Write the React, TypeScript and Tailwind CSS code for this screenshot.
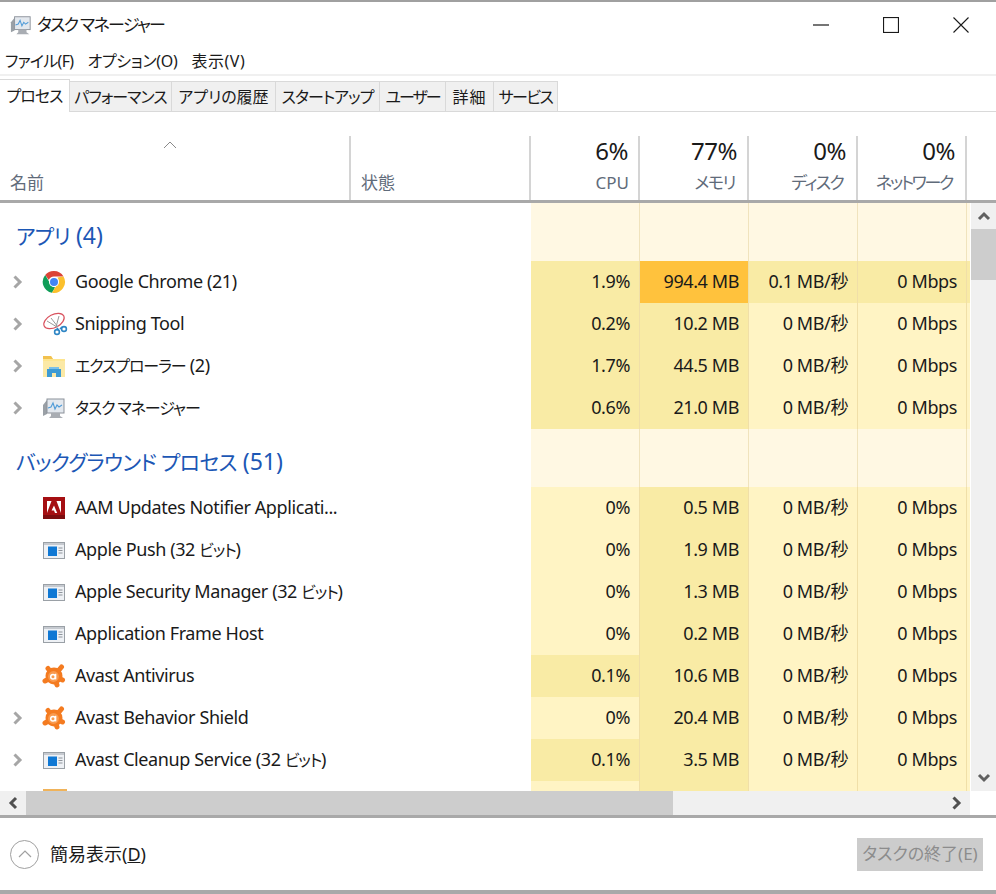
import type { ReactNode } from 'react';

const ChromeIcon = () => (
  <svg width="24" height="24" viewBox="0 0 24 24">
    <path d="M12 1a11 11 0 0 1 9.5 5.5H12a5.5 5.5 0 0 0-5.2 3.6L3.2 5A11 11 0 0 1 12 1z" fill="#db4437" />
    <path d="M3.2 5l4.4 7.6a5 5 0 0 0 5.6 4.6l-3.2 5.6A11 11 0 0 1 3.2 5z" fill="#0f9d58" />
    <path d="M21.5 6.5A11 11 0 0 1 10 22.8l4.8-8.1A5 5 0 0 0 15.4 7.5z" fill="#fbc02d" />
    <circle cx="12" cy="12" r="5" fill="#fff" />
    <circle cx="12" cy="12" r="4" fill="#4285f4" />
  </svg>
);

const SnipIcon = () => (
  <svg width="26" height="24" viewBox="0 0 26 24" fill="none">
    <ellipse cx="12" cy="9" rx="11" ry="6.5" transform="rotate(-28 12 9)" stroke="#d9535f" strokeWidth="1.2" />
    <path d="M9 6l7 9M17 4l-3 11M5 9l10 6" stroke="#9a9a9a" strokeWidth="1" />
    <circle cx="15" cy="20" r="2.4" stroke="#2f86c5" strokeWidth="1.6" />
    <circle cx="22" cy="17" r="2.4" stroke="#2f86c5" strokeWidth="1.6" />
    <path d="M15 16l1.5 2M20 15l-2 2" stroke="#2f86c5" strokeWidth="1.6" />
  </svg>
);

const FolderIcon = () => (
  <svg width="24" height="24" viewBox="0 0 24 24">
    <path d="M1 2h8l2 3h12v18H1z" fill="#fde58f" />
    <path d="M1 2h8l2 3H1z" fill="#f2c14e" />
    <path d="M1 7h22v16H1z" fill="#fbe9a6" />
    <path d="M5 15h14v8H5z" fill="#3d9bd4" />
    <path d="M7 13h10v2H7z" fill="#7cc0e8" />
    <path d="M10 19h4v4h-4z" fill="#fbe9a6" />
  </svg>
);

const TaskIcon = ({ size = 24 }: { size?: number }) => (
  <svg width={size} height={size} viewBox="0 0 24 24" fill="none">
    <path d="M1 9l4-5v14l-4 2z" fill="#9aa0a6" />
    <rect x="5" y="3" width="17" height="14" fill="#e3e8ee" stroke="#8b9199" />
    <path d="M6 12l3-1 2-4 2 6 2-4 2 2 3-2" stroke="#4f9bd8" strokeWidth="1.1" />
    <path d="M9 17h9v3l3 2H7l2-2z" fill="#a9adb3" />
  </svg>
);

const AdobeIcon = () => (
  <svg width="24" height="24" viewBox="0 0 24 24">
    <rect x="1" y="1" width="22" height="22" fill="#a50f12" />
    <rect x="1" y="19" width="22" height="4" fill="#7c0d0f" />
    <path d="M5 5h4.5L5 17zM19 5h-4.5L19 17zM12 9.5l3.2 7.5h-2.2l-1-2.6H9.6z" fill="#fff" />
  </svg>
);

const AppIcon = () => (
  <svg width="24" height="24" viewBox="0 0 24 24">
    <rect x="1.5" y="4.5" width="21" height="16" fill="#eef1f5" stroke="#9aa0a6" />
    <rect x="2" y="5" width="20" height="2" fill="#c6cad0" />
    <rect x="6" y="8.5" width="9" height="9.5" fill="#0f78d4" />
    <path d="M16.5 10h4M16.5 12.5h4M16.5 15h4" stroke="#8e949b" />
  </svg>
);

const AvastIcon = () => (
  <svg width="24" height="24" viewBox="0 0 24 24" fill="none">
    <circle cx="12" cy="12" r="8.5" fill="#f47b20" />
    <path d="M12 12L6 4.5M12 12L19.5 3M12 12L20.5 16M12 12L15 21M12 12L3 17" stroke="#f47b20" strokeWidth="5" strokeLinecap="round" />
    <circle cx="11.5" cy="12.5" r="5.4" fill="#f99a4e" />
    <circle cx="11" cy="12.8" r="2.3" stroke="#fff" strokeWidth="1.5" />
    <path d="M13.6 9.8v5.6" stroke="#fff" strokeWidth="1.5" />
  </svg>
);

const Chevron = ({ dir, className }: { dir: 'left' | 'right' | 'up' | 'down'; className?: string }) => {
  const d = {
    right: 'M3.5 1.5l5.5 5.5-5.5 5.5',
    left: 'M10 2L5 7l5 5',
    up: 'M2 10l5-5 5 5',
    down: 'M2 4l5 5 5-5',
  }[dir];
  return (
    <svg width="14" height="14" viewBox="0 0 14 14" fill="none" className={className}>
      <path d={d} stroke="currentColor" strokeWidth="3" />
    </svg>
  );
};

// kana in the reference's UI font is much narrower than Noto's
const Kana = ({ children }: { children: ReactNode }) => (
  <span className="text-[16px] tracking-[-1.1px]">{children}</span>
);

type Row = {
  name: ReactNode;
  icon: ReactNode;
  expand?: boolean;
  cells: [string, string, string, string];
  heat: [string, string, string, string];
};

const light = 'bg-[#fff4c4]';
const mid = 'bg-[#f9eba5]';
const hot = 'bg-[#ffc23d]';

const apps: Row[] = [
  { name: 'Google Chrome (21)', icon: <ChromeIcon />, expand: true, cells: ['1.9%', '994.4 MB', '0.1 MB/秒', '0 Mbps'], heat: [mid, hot, mid, mid] },
  { name: 'Snipping Tool', icon: <SnipIcon />, expand: true, cells: ['0.2%', '10.2 MB', '0 MB/秒', '0 Mbps'], heat: [mid, mid, light, light] },
  { name: <><Kana>エクスプローラー</Kana> (2)</>, icon: <FolderIcon />, expand: true, cells: ['1.7%', '44.5 MB', '0 MB/秒', '0 Mbps'], heat: [mid, mid, light, light] },
  { name: <Kana>タスク マネージャー</Kana>, icon: <TaskIcon />, expand: true, cells: ['0.6%', '21.0 MB', '0 MB/秒', '0 Mbps'], heat: [mid, mid, light, light] },
];

const background: Row[] = [
  { name: 'AAM Updates Notifier Applicati...', icon: <AdobeIcon />, cells: ['0%', '0.5 MB', '0 MB/秒', '0 Mbps'], heat: [light, mid, light, light] },
  { name: <>Apple Push (32 <Kana>ビット</Kana>)</>, icon: <AppIcon />, cells: ['0%', '1.9 MB', '0 MB/秒', '0 Mbps'], heat: [light, mid, light, light] },
  { name: <>Apple Security Manager (32 <Kana>ビット</Kana>)</>, icon: <AppIcon />, cells: ['0%', '1.3 MB', '0 MB/秒', '0 Mbps'], heat: [light, mid, light, light] },
  { name: 'Application Frame Host', icon: <AppIcon />, cells: ['0%', '0.2 MB', '0 MB/秒', '0 Mbps'], heat: [light, mid, light, light] },
  { name: 'Avast Antivirus', icon: <AvastIcon />, cells: ['0.1%', '10.6 MB', '0 MB/秒', '0 Mbps'], heat: [mid, mid, light, light] },
  { name: 'Avast Behavior Shield', icon: <AvastIcon />, expand: true, cells: ['0%', '20.4 MB', '0 MB/秒', '0 Mbps'], heat: [light, mid, light, light] },
  { name: <>Avast Cleanup Service (32 <Kana>ビット</Kana>)</>, icon: <AppIcon />, expand: true, cells: ['0.1%', '3.5 MB', '0 MB/秒', '0 Mbps'], heat: [mid, mid, light, light] },
];

const tabs = [
  { label: 'パフォーマンス', cls: 'w-[102px] tracking-[-1px]' },
  { label: 'アプリの履歴', cls: 'w-[104px]' },
  { label: 'スタートアップ', cls: 'w-[104px] tracking-[-1px]' },
  { label: 'ユーザー', cls: 'w-[66px] tracking-[-2px]' },
  { label: '詳細', cls: 'w-[48px] tracking-[1px]' },
  { label: 'サービス', cls: 'w-[64px] tracking-[-1.5px]' },
];
const cols = 'grid grid-cols-[351px_180px_109px_109px_109px_109px_3px]';

const ProcessRow = ({ row }: { row: Row }) => (
  <div className={cols + ' h-[42px]'}>
    <div className="flex items-center text-[18px] tracking-[-0.4px] text-[#1a1a1a]">
      <div className="w-[42px] shrink-0 pl-[11px] text-[#a6a6a6]">{row.expand && <Chevron dir="right" />}</div>
      <div className="flex w-[33px] shrink-0 items-center">{row.icon}</div>
      <span className="whitespace-nowrap pb-[2px]">{row.name}</span>
    </div>
    <div />
    {row.cells.map((cell, i) => (
      <div key={i} className={row.heat[i] + ' flex items-center justify-end whitespace-nowrap border-r border-[#f0dfa8] pb-[2px] pr-[9px] text-[18px] tracking-[-0.4px] text-[#1a1a1a]'}>
        {cell}
      </div>
    ))}
    <div className={row.heat[3]} />
  </div>
);

const GroupRow = ({ label, count }: { label: string; count: string }) => (
  <div className={cols + ' h-[58px]'}>
    <div className="col-span-2 flex items-end whitespace-nowrap pb-[9px] pl-[16px] text-[23px] text-[#1c57b5]">
      <span className="text-[21px] tracking-[-0.7px]">{label}</span>&nbsp;{count}
    </div>
    {[0, 1, 2, 3].map((i) => (
      <div key={i} className="border-r border-[#f0e3bd] bg-[#fff8e3]" />
    ))}
    <div className="bg-[#fff8e3]" />
  </div>
);

const HeaderCol = ({ pct, label, labelCls }: { pct: string; label: string; labelCls?: string }) => (
  <div className="flex flex-col items-end whitespace-nowrap border-r-2 border-[#d4d4d4] pr-[9px]">
    <div className="mr-[1px] text-[24px] leading-[30px] tracking-[-0.5px] text-[#1a1a1a]">{pct}</div>
    <div className={'mt-[4px] text-[17px] leading-[26px] text-[#5f6b7a] ' + (labelCls ?? '')}>{label}</div>
  </div>
);

export default function App() {
  return (
    <div className="flex h-[894px] w-[996px] flex-col overflow-hidden border-t-2 border-[#a0a0a0] bg-white font-['Noto_Sans','Noto_Sans_CJK_JP',sans-serif] [font-feature-settings:'palt']">
      {/* title bar */}
      <div className="flex h-[46px] shrink-0 items-center pl-[10px]">
        <TaskIcon size={22} />
        <span className="ml-[5px] text-[17px] tracking-[-1.7px] text-[#1a1a1a]">タスク マネージャー</span>
        <div className="ml-auto flex items-center gap-[54px] pr-[27px] text-[#1a1a1a]">
          <svg width="16" height="16" viewBox="0 0 16 16"><path d="M0 8h16" stroke="currentColor" strokeWidth="1.2" /></svg>
          <svg width="16" height="16" viewBox="0 0 16 16" fill="none"><rect x="0.5" y="0.5" width="15" height="15" stroke="currentColor" strokeWidth="1.2" /></svg>
          <svg width="16" height="16" viewBox="0 0 16 16" fill="none"><path d="M0.5 0.5l15 15M15.5 0.5l-15 15" stroke="currentColor" strokeWidth="1.1" /></svg>
        </div>
      </div>
      {/* menu */}
      <div className="flex h-[28px] shrink-0 items-center gap-[14px] border-b-2 border-[#f0f0f0] pl-[5px] text-[16px] text-[#1a1a1a]">
        <span className="tracking-[-0.7px]">ファイル(F)</span>
        <span className="tracking-[-0.3px]">オプション(O)</span>
        <span className="tracking-[0.5px]">表示(V)</span>
      </div>
      {/* tabs */}
      <div className="flex h-[36px] shrink-0 items-end border-b border-[#d9d9d9]">
        <div className="z-10 -mb-px flex h-[33px] w-[70px] items-center justify-center whitespace-nowrap border-r border-t border-[#d9d9d9] bg-white text-[16px] tracking-[-1px] text-[#1a1a1a]">プロセス</div>
        {tabs.map((t) => (
          <div key={t.label} className={t.cls + ' flex h-[30px] items-center justify-center whitespace-nowrap border-r border-t border-[#d9d9d9] bg-[#f0f0f0] text-[16px] text-[#1a1a1a]'}>
            {t.label}
          </div>
        ))}
      </div>
      {/* column headers */}
      <div className="mt-[24px] shrink-0 border-b-[3px] border-[#a9a9a9]">
        <div className={cols + ' h-[64px]'}>
          <div className="relative flex items-end border-r-2 border-[#d4d4d4] pb-[4px] pl-[10px] text-[17px] leading-[26px] text-[#5f6b7a]">
            <svg width="14" height="8" viewBox="0 0 14 8" fill="none" className="absolute left-[163px] top-[5px]"><path d="M1 7l6-6 6 6" stroke="#8a8a8a" /></svg>
            名前
          </div>
          <div className="flex items-end border-r-2 border-[#d4d4d4] pb-[4px] pl-[10px] text-[17px] leading-[26px] text-[#5f6b7a]">状態</div>
          <HeaderCol pct="6%" label="CPU" />
          <HeaderCol pct="77%" label="メモリ" labelCls="mr-[3px] tracking-[-1.5px]" />
          <HeaderCol pct="0%" label="ディスク" labelCls="mr-[4px] tracking-[-1.7px]" />
          <HeaderCol pct="0%" label="ネットワーク" labelCls="mr-[4px] tracking-[-2.3px]" />
        </div>
      </div>
      {/* process list with vertical scrollbar */}
      <div className="flex h-[588px] shrink-0">
        <div className="w-[971px] overflow-hidden">
          <GroupRow label="アプリ" count="(4)" />
          {apps.map((r, i) => <ProcessRow key={i} row={r} />)}
          <GroupRow label="バックグラウンド プロセス" count="(51)" />
          {background.map((r, i) => <ProcessRow key={i} row={r} />)}
          {/* next row, cut off by the scrollbar */}
          <div className={cols + ' h-[42px]'}>
            <div className="pl-[43px] pt-[8px]"><div className="h-[2px] w-[24px] bg-[#f0b35a]" /></div>
            <div />
            <div className={light + ' border-r border-[#f0dfa8]'} />
            <div className={mid + ' border-r border-[#f0dfa8]'} />
            <div className={light + ' border-r border-[#f0dfa8]'} />
            <div className={light + ' border-r border-[#f0dfa8]'} />
            <div className={light} />
          </div>
        </div>
        <div className="flex w-[25px] flex-col bg-[#f0f0f0]">
          <div className="flex h-[26px] items-center justify-center text-[#606060]"><Chevron dir="up" /></div>
          <div className="h-[51px] bg-[#cdcdcd]" />
          <div className="mt-auto flex h-[26px] items-center justify-center text-[#606060]"><Chevron dir="down" /></div>
        </div>
      </div>
      {/* horizontal scrollbar */}
      <div className="flex h-[24px] w-[970px] shrink-0 bg-[#f0f0f0]">
        <div className="flex w-[26px] items-center justify-center text-[#505050]"><Chevron dir="left" /></div>
        <div className="w-[647px] bg-[#cdcdcd]" />
        <div className="ml-auto flex w-[26px] items-center justify-center text-[#505050]"><Chevron dir="right" /></div>
      </div>
      {/* footer */}
      <div className="flex h-[79px] shrink-0 items-center justify-between border-b-[4px] border-t-[3px] border-y-[#a9a9a9] pl-[10px] pr-[13px]">
        <div className="flex items-center gap-[11px]">
          <div className="flex h-[29px] w-[29px] items-center justify-center rounded-full border border-[#a0a0a0]">
            <svg width="14" height="8" viewBox="0 0 14 8" fill="none"><path d="M1 7l6-6 6 6" stroke="#a0a0a0" strokeWidth="1.2" /></svg>
          </div>
          <span className="text-[18px] text-[#1a1a1a]">簡易表示(<span className="underline">D</span>)</span>
        </div>
        <div className="flex h-[33px] w-[126px] items-center justify-center bg-[#cccccc] text-[17px] text-[#8c8c8c]">タスクの終了(E)</div>
      </div>
    </div>
  );
}
